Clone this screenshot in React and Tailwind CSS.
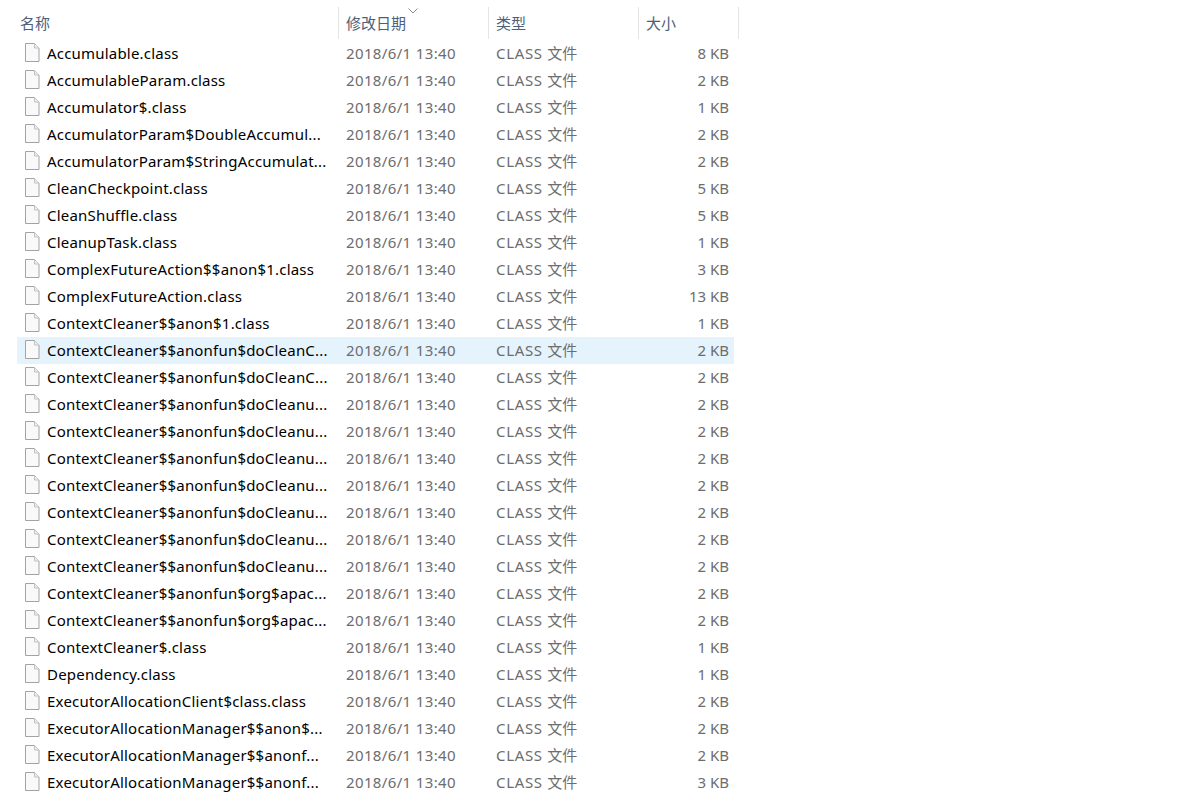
import React from 'react';

const files = [
    ['Accumulable.class', '8 KB'],
    ['AccumulableParam.class', '2 KB'],
    ['Accumulator$.class', '1 KB'],
    ['AccumulatorParam$DoubleAccumul...', '2 KB'],
    ['AccumulatorParam$StringAccumulat...', '2 KB'],
    ['CleanCheckpoint.class', '5 KB'],
    ['CleanShuffle.class', '5 KB'],
    ['CleanupTask.class', '1 KB'],
    ['ComplexFutureAction$$anon$1.class', '3 KB'],
    ['ComplexFutureAction.class', '13 KB'],
    ['ContextCleaner$$anon$1.class', '1 KB'],
    ['ContextCleaner$$anonfun$doCleanC...', '2 KB'],
    ['ContextCleaner$$anonfun$doCleanC...', '2 KB'],
    ['ContextCleaner$$anonfun$doCleanu...', '2 KB'],
    ['ContextCleaner$$anonfun$doCleanu...', '2 KB'],
    ['ContextCleaner$$anonfun$doCleanu...', '2 KB'],
    ['ContextCleaner$$anonfun$doCleanu...', '2 KB'],
    ['ContextCleaner$$anonfun$doCleanu...', '2 KB'],
    ['ContextCleaner$$anonfun$doCleanu...', '2 KB'],
    ['ContextCleaner$$anonfun$doCleanu...', '2 KB'],
    ['ContextCleaner$$anonfun$org$apac...', '2 KB'],
    ['ContextCleaner$$anonfun$org$apac...', '2 KB'],
    ['ContextCleaner$.class', '1 KB'],
    ['Dependency.class', '1 KB'],
    ['ExecutorAllocationClient$class.class', '2 KB'],
    ['ExecutorAllocationManager$$anon$...', '2 KB'],
    ['ExecutorAllocationManager$$anonf...', '2 KB'],
    ['ExecutorAllocationManager$$anonf...', '3 KB'],
];

const FileIcon = () => (
    <svg width="16" height="19" viewBox="0 0 16 19" className="shrink-0 mb-[2px]">
        <path d="M1.5 0.5H10.5L15 5V18.5H1.5Z" fill="#f9f9f9" stroke="#a3a3a3" />
        <path d="M10.5 0.5V5H15" fill="#eeeeee" stroke="#c2c2c2" />
    </svg>
);

const HeaderCell = ({ label, className = '', children }) => (
    <div className={`relative h-[32px] flex items-center border-r border-[#e5e5e5] ${className}`}>
        {label}
        {children}
    </div>
);

const App = () => {
    return (
        <div className="h-[794px] overflow-hidden bg-white font-['Noto_Sans','Noto_Sans_CJK_SC',sans-serif] text-[15px]">
            {/* Column headers */}
            <div className="flex pt-[7px] h-[40px] text-[#4c607a]">
                <HeaderCell label="名称" className="w-[339px] pl-5" />
                <HeaderCell label="修改日期" className="w-[150px] pl-[7px]">
                    <svg width="10" height="6" viewBox="0 0 10 6" className="absolute left-[69px] top-[1px]">
                        <path d="M0.5 0.5L5 5L9.5 0.5" fill="none" stroke="#8a8f98" />
                    </svg>
                </HeaderCell>
                <HeaderCell label="类型" className="w-[150px] pl-[7px]" />
                <HeaderCell label="大小" className="w-[100px] pl-[7px]" />
            </div>

            {/* File rows */}
            <div className="w-[717px] ml-[17px]">
                {files.map(([name, size], i) => (
                    <div key={i} className={`flex items-center h-[27px] ${i === 11 ? 'bg-[#e5f3fd]' : ''}`}>
                        <div className="w-[323px] flex items-center pl-[7px] gap-[7px] text-black whitespace-nowrap tracking-[0.2px]">
                            <FileIcon />
                            <span>{name}</span>
                        </div>
                        <div className="w-[150px] pl-[6px] text-[#6d6d6d] tracking-[0.36px]">2018/6/1 13:40</div>
                        <div className="w-[150px] pl-[6px] text-[#6d6d6d]">
                            <span className="tracking-[0.65px]">CLASS </span>文件
                        </div>
                        <div className="w-[89px] text-right text-[#6d6d6d]">{size}</div>
                    </div>
                ))}
            </div>
        </div>
    );
};

export default App;
